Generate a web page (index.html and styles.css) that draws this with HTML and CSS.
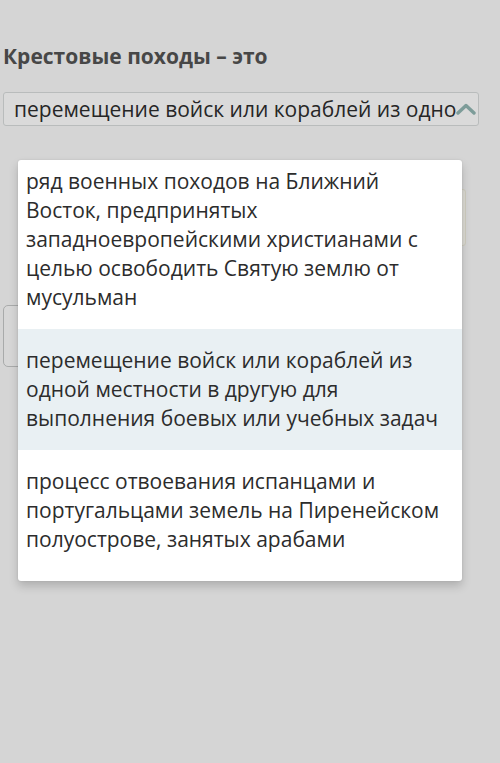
FILE: index.html
```html
<!DOCTYPE html>
<html lang="ru">
<head>
<meta charset="utf-8">
<link rel="stylesheet" href="styles.css">
</head>
<body>
<div class="page">
  <h2 class="title">Крестовые походы – это</h2>
  <div class="select-wrap">
    <div class="select">
      <span class="select-text">перемещение войск или кораблей из одной местности в другую для выполнения боевых или учебных задач</span>
      <svg class="chev" width="20" height="12" viewBox="0 0 20 12"><path d="M2 10 L10 2.5 L18 10" fill="none" stroke="#7d9c99" stroke-width="3.4" stroke-linecap="round" stroke-linejoin="round"/></svg>
    </div>
    <ul class="menu">
      <li class="item first">ряд военных походов на Ближний Восток, предпринятых западноевропейскими христианами с целью освободить Святую землю от мусульман</li>
      <li class="item active">перемещение войск или кораблей из одной местности в другую для выполнения боевых или учебных задач</li>
      <li class="item last">процесс отвоевания испанцами и португальцами земель на Пиренейском полуострове, занятых арабами</li>
    </ul>
  </div>
  <div class="under-a"></div>
  <div class="under-b"></div>
</div>
</body>
</html>
```
FILE: styles.css
```css
html, body {
  margin: 0;
  padding: 0;
  background: #d5d5d5;
}
body {
  font-family: "Open Sans", "Noto Sans", sans-serif;
  width: 500px;
  height: 763px;
  overflow: hidden;
}
.page {
  padding: 41px 0 0 3px;
}
.title {
  margin: 0;
  font-size: 21px;
  font-weight: 700;
  line-height: 30px;
  color: #474747;
}
.select-wrap {
  position: relative;
  margin-top: 21px;
}
.select {
  width: 476px;
  height: 34px;
  box-sizing: border-box;
  border: 1px solid #b9bcbc;
  border-radius: 3px;
  background: #dadada;
  display: flex;
  align-items: center;
  padding: 0 2px 0 10px;
}
.select-text {
  flex: 1;
  white-space: nowrap;
  overflow: hidden;
  font-size: 21px;
  color: #262626;
  line-height: 30px;
}
.chev {
  flex: none;
}
.menu {
  position: absolute;
  left: 15px;
  top: 68px;
  width: 444px;
  margin: 0;
  padding: 0;
  list-style: none;
  background: #ffffff;
  border-radius: 3px;
  box-shadow: 0 5px 10px rgba(0, 0, 0, 0.18), 0 0 2px rgba(0, 0, 0, 0.1);
  z-index: 2;
}
.item {
  font-size: 21px;
  line-height: 29px;
  color: #2c2c2c;
  padding: 17px 8px 17px 8px;
}
.item.first {
  padding-top: 7px;
}
.item.last {
  padding-bottom: 27px;
}
.item.active {
  background: #e9f0f3;
}
.under-a {
  margin: 63px 0 0 20px;
  width: 443px;
  height: 57px;
  box-sizing: border-box;
  border: 1px solid #cfcdbf;
  border-radius: 3px;
  background: #dcdbd4;
}
.under-b {
  margin-top: 59px;
  width: 300px;
  height: 62px;
  box-sizing: border-box;
  border: 1px solid #a9abab;
  border-radius: 5px;
  background: #d7d7d7;
}
```
